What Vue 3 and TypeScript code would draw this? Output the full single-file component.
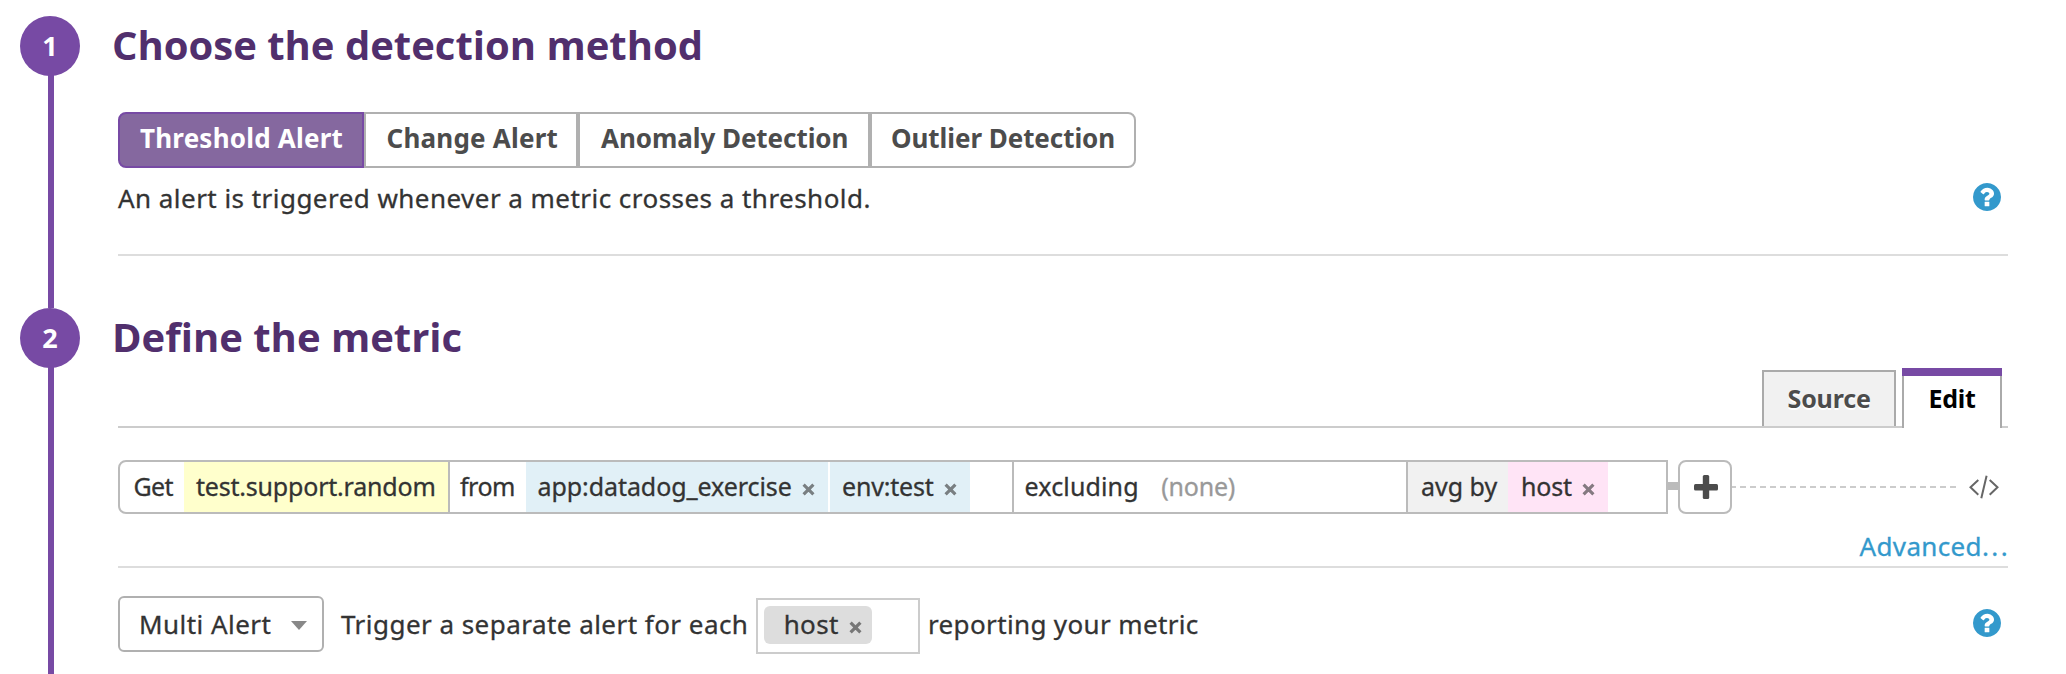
<script setup lang="ts">
import { ref } from 'vue'

interface Method {
  key: string
  label: string
}

const methods: Method[] = [
  { key: 'threshold', label: 'Threshold Alert' },
  { key: 'change', label: 'Change Alert' },
  { key: 'anomaly', label: 'Anomaly Detection' },
  { key: 'outlier', label: 'Outlier Detection' },
]
const activeMethod = ref('threshold')

const scopeTags = [
  { key: 'app', label: 'app:datadog_exercise' },
  { key: 'env', label: 'env:test' },
]

const helpPath =
  'M1024 1376v-192q0-14-9-23t-23-9h-192q-14 0-23 9t-9 23v192q0 14 9 23t23 9h192q14 0 23-9t9-23zm256-672q0-88-55.5-163t-138.5-116-170-41q-243 0-371 213-15 24 8 42l132 100q7 6 19 6 16 0 25-12 53-68 86-92 34-24 86-24 48 0 85.5 26t37.5 59q0 38-20 61t-68 45q-63 28-115.5 86.5t-52.5 125.5v36q0 14 9 23t23 9h192q14 0 23-9t9-23q0-19 21.5-49.5t54.5-49.5q32-18 49-28.5t46-35 44.5-48 28-60.5 12.5-81zm384 192q0 209-103 385.5t-279.5 279.5-385.5 103-385.5-103-279.5-279.5-103-385.5 103-385.5 279.5-279.5 385.5-103 385.5 103 279.5 279.5 103 385.5z'
const crossPath = 'M1.6 1.6L11.4 11.4M11.4 1.6L1.6 11.4'
</script>

<template>
  <main class="monitor">
    <section class="step step-one">
      <div class="rail">
        <div class="badge">1</div>
        <div class="line"></div>
      </div>
      <div class="body">
        <h2>Choose the detection method</h2>
        <div class="methods">
          <button
            v-for="m in methods"
            :key="m.key"
            type="button"
            :class="['method', m.key, { active: m.key === activeMethod }]"
            @click="activeMethod = m.key"
          >{{ m.label }}</button>
        </div>
        <div class="description">
          <p>An alert is triggered whenever a metric crosses a threshold.</p>
          <svg class="help" viewBox="128 128 1536 1536"><path :d="helpPath" /></svg>
        </div>
      </div>
    </section>

    <section class="step step-two">
      <div class="rail">
        <div class="badge">2</div>
        <div class="line"></div>
      </div>
      <div class="body">
        <h2>Define the metric</h2>
        <nav class="tabs">
          <div class="tab source">Source</div>
          <div class="tab edit">Edit</div>
        </nav>

        <div class="query-row">
          <div class="query">
            <span class="cell get">Get</span>
            <span class="cell metric">test.support.random</span>
            <span class="cell from">from</span>
            <span v-for="t in scopeTags" :key="t.key" :class="['cell', 'tag', t.key]">
              {{ t.label }}
              <svg class="cross" viewBox="0 0 13 13"><path :d="crossPath" /></svg>
            </span>
            <span class="cell excluding">excluding<span class="none">(none)</span></span>
            <span class="cell avg">avg by</span>
            <span class="cell tag group">
              host
              <svg class="cross" viewBox="0 0 13 13"><path :d="crossPath" /></svg>
            </span>
          </div>
          <div class="connector"></div>
          <button type="button" class="plus" aria-label="Add">
            <svg viewBox="0 0 24 24">
              <rect x="0" y="9" width="24" height="6.4" rx="1.5" />
              <rect x="8.8" y="0" width="6.4" height="24" rx="1.5" />
            </svg>
          </button>
          <div class="dashes"></div>
          <svg class="code" viewBox="0 0 30 24">
            <path d="M9.3 5L1.5 12.2L9.3 19.8M20.7 5L28.5 12.2L20.7 19.8M17.6 .8L12.3 23.2" />
          </svg>
        </div>

        <div class="advanced"><a>Advanced<span class="dots">...</span></a></div>

        <div class="trigger">
          <div class="select">Multi Alert<i class="caret"></i></div>
          <span class="lead">Trigger a separate alert for each</span>
          <div class="host-input">
            <span class="chip">
              host
              <svg class="cross" viewBox="0 0 13 13"><path :d="crossPath" /></svg>
            </span>
          </div>
          <span class="tail">reporting your metric</span>
          <svg class="help" viewBox="128 128 1536 1536"><path :d="helpPath" /></svg>
        </div>
      </div>
    </section>
  </main>
</template>

<style>
body {
  margin: 0;
  background: #fff;
}
</style>

<style scoped>
.monitor {
  box-sizing: border-box;
  width: 2066px;
  height: 674px;
  padding-top: 16px;
  overflow: hidden;
  background: #fff;
  color: #333;
  font-family: "Noto Sans", "Open Sans", sans-serif;
  font-size: 26px;
  white-space: nowrap;
}
.monitor * {
  box-sizing: border-box;
}
.step {
  display: flex;
}
.step-one {
  height: 292px;
}
.step-two {
  height: 366px;
}
.rail {
  display: flex;
  flex-direction: column;
  flex: none;
  width: 60px;
  margin-left: 20px;
}
.badge {
  flex: none;
  width: 60px;
  height: 60px;
  border-radius: 50%;
  background: #774aa4;
  color: #fff;
  font: bold 27px/59px "Open Sans", sans-serif;
  text-align: center;
}
.line {
  flex: 1;
  width: 6px;
  margin: -1px 0 0 28px;
  background: #774aa4;
}
.body {
  width: 1890px;
  margin-left: 38px;
}
h2 {
  height: 58px;
  margin: 0 0 0 -6px;
  color: #512f6d;
  font: bold 40px/58px "Open Sans", sans-serif;
}

.methods {
  display: flex;
  margin-top: 38px;
}
.method {
  height: 56px;
  margin: 0;
  padding: 0 0 4px 20px;
  border: 2px solid #b0b0b0;
  background: #fff;
  color: #4c4c4c;
  font: bold 26px/48px "Noto Sans", sans-serif;
  text-align: left;
}
.threshold {
  width: 246px;
  border-radius: 8px 0 0 8px;
  letter-spacing: 0.21px;
}
.change {
  width: 214px;
  padding-left: 20.5px;
  letter-spacing: 0.21px;
}
.anomaly {
  width: 292px;
  padding-left: 21px;
  letter-spacing: -0.06px;
}
.outlier {
  width: 266px;
  padding-left: 19px;
  border-radius: 0 8px 8px 0;
  letter-spacing: -0.06px;
}
.method.active {
  border-color: #774aa4;
  background: #85689f;
  color: #fff;
}
.description,
.query,
.advanced,
.trigger {
  -webkit-text-stroke: 0.3px currentColor;
}
.description {
  display: flex;
  align-items: center;
  justify-content: space-between;
  height: 78px;
  padding: 0 7px 36px 0;
  margin-top: 10px;
  border-bottom: 2px solid #ddd;
  letter-spacing: 0.46px;
}
.description p {
  margin: 0;
  line-height: 40px;
}
.help {
  flex: none;
  width: 28px;
  height: 28px;
  fill: #3399cc;
}
.description .help {
  margin-bottom: 2px;
}

.tabs {
  display: flex;
  align-items: flex-end;
  justify-content: flex-end;
  gap: 6px;
  height: 62px;
  padding-right: 6px;
  border-bottom: 2px solid #ccc;
}
.tab {
  border: 2px solid #aaa;
  border-bottom: 0;
  font-size: 25px;
  font-weight: bold;
}
.source {
  width: 134px;
  height: 56px;
  padding-left: 23.5px;
  background: #f1f1f1;
  color: #4c4c4c;
  letter-spacing: -0.15px;
  line-height: 52px;
  text-shadow: 0 2px 0 #fff;
}
.edit {
  width: 100px;
  height: 60px;
  margin-bottom: -2px;
  padding-left: 24.5px;
  border-top: 8px solid #774aa4;
  border-image: linear-gradient(#774aa4 8px, #aaa 8px) 8 2 0 2;
  background: #fff;
  color: #000;
  letter-spacing: -0.3px;
  line-height: 45px;
}

.query-row {
  display: flex;
  align-items: center;
  height: 54px;
  margin-top: 32px;
}
.query {
  display: flex;
  width: 1550px;
  height: 54px;
  overflow: hidden;
  border: 2px solid #bbb;
  border-radius: 8px 0 0 8px;
  font-size: 25px;
  line-height: 48px;
}
.cell {
  flex: none;
  height: 50px;
}
.get {
  width: 64px;
  padding-left: 13.5px;
  letter-spacing: -0.7px;
}
.metric {
  width: 266px;
  padding-left: 12px;
  border-right: 2px solid #bbb;
  background: #ffffcc;
  letter-spacing: -0.2px;
}
.from {
  width: 76px;
  padding-left: 10px;
  letter-spacing: -0.5px;
}
.tag {
  display: flex;
  align-items: center;
  justify-content: space-between;
  padding: 0 13.5px 2px 12px;
  background: #e1f0f7;
}
.cross {
  flex: none;
  width: 13px;
  height: 13px;
  margin-top: 7px;
  fill: none;
  stroke: rgba(51, 51, 51, 0.6);
  stroke-width: 3.2;
}
.app {
  width: 302px;
  padding-left: 11.5px;
  letter-spacing: -0.07px;
}
.env {
  width: 140px;
  margin-left: 2px;
  padding-right: 13px;
  letter-spacing: -0.19px;
}
.excluding {
  width: 396px;
  margin-left: 42px;
  padding-left: 10.5px;
  border: solid #bbb;
  border-width: 0 2px;
  letter-spacing: 0.15px;
}
.none {
  margin-left: 22.5px;
  color: #999;
  letter-spacing: -0.2px;
}
.avg {
  width: 100px;
  padding-left: 13px;
  background: #f1f1f1;
}
.group {
  width: 100px;
  padding-left: 13px;
  background: #ffe4f6;
  letter-spacing: -0.2px;
}
.connector {
  width: 10px;
  height: 8px;
  margin-bottom: 2px;
  background: #bbb;
}
.plus {
  display: flex;
  align-items: center;
  justify-content: center;
  width: 54px;
  height: 54px;
  padding: 0;
  border: 2px solid #bbb;
  border-radius: 8px;
  background: #fff;
}
.plus svg {
  width: 24px;
  height: 24px;
  margin: 0 0 1px 2px;
  fill: #4c4c4c;
}
.dashes {
  width: 224px;
  height: 2px;
  background: repeating-linear-gradient(90deg, #ccc 0 4px, transparent 4px 8px, #ccc 8px 10px);
}
.code {
  width: 30px;
  height: 24px;
  margin-left: 13px;
  fill: none;
  stroke: #666;
  stroke-width: 2;
}

.advanced {
  height: 54px;
  padding-top: 12px;
  border-bottom: 2px solid #ddd;
  text-align: right;
  line-height: 41px;
}
.advanced a {
  margin-right: -2px;
  color: #3399cc;
  letter-spacing: 0.34px;
}
.dots {
  letter-spacing: 2.4px;
}

.trigger {
  display: flex;
  align-items: flex-start;
  margin-top: 28px;
  letter-spacing: 0.46px;
  line-height: 56px;
}
.select {
  display: flex;
  align-items: center;
  justify-content: space-between;
  width: 206px;
  height: 56px;
  padding: 0 15.5px 0 19px;
  border: 2px solid #b0b0b0;
  border-radius: 6px;
}
.caret {
  margin-top: 2px;
  border: solid transparent;
  border-width: 9px 8px 0;
  border-top-color: #888;
}
.lead {
  width: 415px;
  margin-left: 17px;
}
.host-input {
  width: 164px;
  height: 56px;
  margin: 2px 0 0 0;
  padding: 6px;
  border: 2px solid #ccc;
}
.chip {
  display: flex;
  align-items: center;
  justify-content: space-between;
  width: 108px;
  height: 38px;
  padding: 0 10.5px 2px 19.7px;
  border-radius: 6px;
  background: #ddd;
  line-height: 36px;
  letter-spacing: 0.35px;
}
.chip .cross {
  margin-top: 7px;
}
.tail {
  margin-left: 8px;
  letter-spacing: 0.36px;
}
.trigger .help {
  margin: 13px 7px 0 auto;
}
</style>
